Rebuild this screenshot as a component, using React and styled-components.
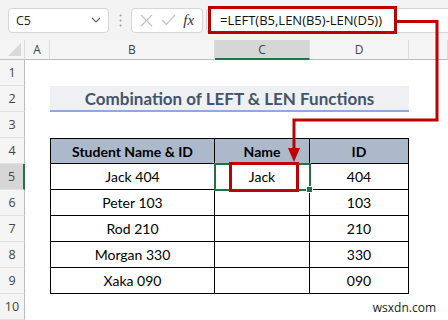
import React from "react";
import styled, { createGlobalStyle } from "styled-components";

const GlobalStyle = createGlobalStyle`
  body {
    margin: 0;
    background: #fff;
    font-family: "Open Sans", "Noto Sans", sans-serif;
  }
`;

const Window = styled.div`
  position: relative;
  width: 448px;
  height: 320px;
  overflow: hidden;
  background: #fff;
`;

const Toolbar = styled.div`
  display: flex;
  align-items: center;
  height: 40px;
  padding-left: 8px;
  background: #f3f3f3;
`;

const NameBox = styled.div`
  display: flex;
  align-items: center;
  justify-content: space-between;
  width: 101px;
  height: 25px;
  box-sizing: border-box;
  padding: 0 7px 0 7px;
  background: #fff;
  border: 1px solid #d6d6d6;
  border-radius: 4px;
  font-size: 12.5px;
  color: #222;
`;

const Dots = styled.div`
  display: flex;
  justify-content: center;
  width: 22px;
`;

const IconBox = styled.div`
  display: flex;
  align-items: center;
  justify-content: space-around;
  width: 72px;
  height: 25px;
  box-sizing: border-box;
  padding: 0 4px;
  background: #fff;
  border: 1px solid #d6d6d6;
  border-radius: 4px;
`;

const Fx = styled.span`
  font-family: "Liberation Serif", serif;
  font-style: italic;
  font-size: 15px;
  color: #333;
`;

const FormulaBar = styled.div`
  flex: 1;
  display: flex;
  align-items: center;
  height: 25px;
  margin-left: 3px;
  box-sizing: border-box;
  background: #fff;
  border: 1px solid #d6d6d6;
  border-right: none;
  border-radius: 4px 0 0 4px;
`;

const Formula = styled.div`
  display: flex;
  align-items: center;
  width: 189px;
  height: 28px;
  margin-left: 1px;
  box-sizing: border-box;
  padding-left: 9px;
  border: 3px solid #c00000;
  font-size: 13px;
  color: #111;
  white-space: nowrap;
`;

const Sheet = styled.div`
  display: grid;
  grid-template-columns: 25px 25px 165px 95px 99px 39px;
  grid-template-rows: 20px repeat(10, 26px);
`;

const ColHead = styled.div`
  display: flex;
  align-items: center;
  justify-content: center;
  box-sizing: border-box;
  background: ${(p) => (p.$active ? "#d6d6d6" : "#f5f5f5")};
  border-right: 1px solid #dcdcdc;
  border-bottom: ${(p) => (p.$active ? "2px solid #217346" : "1px solid #bdbdbd")};
  font-size: 12px;
  color: #444;
`;

const Corner = styled(ColHead)`
  position: relative;
  &::after {
    content: "";
    position: absolute;
    right: 3px;
    bottom: 3px;
    border-style: solid;
    border-width: 0 0 13px 13px;
    border-color: transparent transparent #d9d9d9 transparent;
  }
`;

const RowHead = styled.div`
  display: flex;
  align-items: center;
  justify-content: center;
  box-sizing: border-box;
  background: ${(p) => (p.$active ? "#d6d6d6" : "#f5f5f5")};
  border-right: ${(p) => (p.$active ? "2px solid #217346" : "1px solid #bdbdbd")};
  border-bottom: 1px solid #e0e0e0;
  font-size: 12.5px;
  color: #444;
`;

const Cell = styled.div`
  position: relative;
  display: flex;
  align-items: center;
  justify-content: center;
  box-sizing: border-box;
  font-family: Lato, "Open Sans", sans-serif;
  font-size: 14px;
  color: #000;
  background: ${(p) => (p.$head ? "#acb9ca" : "transparent")};
  font-weight: ${(p) => (p.$head ? 700 : 400)};
  border-right: ${(p) => (p.$boxed ? "1px solid #000" : "none")};
  border-bottom: ${(p) => (p.$boxed ? "1px solid #000" : "none")};
  border-left: ${(p) => (p.$first ? "1px solid #000" : "none")};
  border-top: ${(p) => (p.$top ? "1px solid #000" : "none")};
  ${(p) =>
    p.$selected &&
    `
    outline: 2px solid #217346;
    outline-offset: -1px;
    z-index: 1;
    &::after {
      content: "";
      position: absolute;
      right: -4px;
      bottom: -4px;
      width: 5px;
      height: 5px;
      background: #217346;
      border: 1px solid #fff;
    }
  `}
`;

const Title = styled.div`
  grid-column: span 3;
  display: flex;
  align-items: center;
  justify-content: center;
  box-sizing: border-box;
  background: #eef0f4;
  border-bottom: 2px solid #8ea9db;
  font-family: Lato, "Open Sans", sans-serif;
  font-weight: 700;
  font-size: 17px;
  color: #44546a;
`;

const Callout = styled.div`
  position: absolute;
  left: 14px;
  right: 10px;
  top: -2px;
  bottom: -3px;
  border: 3px solid #c00000;
  pointer-events: none;
`;

const Arrow = styled.svg`
  position: absolute;
  left: 0;
  top: 0;
  pointer-events: none;
  z-index: 3;
`;

const Watermark = styled.div`
  position: absolute;
  right: 12px;
  bottom: 4px;
  font-family: "Open Sans", sans-serif;
  font-size: 12px;
  color: #222;
`;

const students = [
  ["Jack 404", "Jack", "404"],
  ["Peter 103", "", "103"],
  ["Rod 210", "", "210"],
  ["Morgan 330", "", "330"],
  ["Xaka 090", "", "090"],
];

const columns = ["A", "B", "C", "D", ""];

export default function App() {
  return (
    <Window>
      <GlobalStyle />
      <Toolbar>
        <NameBox>
          <span>C5</span>
          <svg width="10" height="6" viewBox="0 0 10 6">
            <path d="M1 1 L5 5 L9 1" fill="none" stroke="#666" strokeWidth="1.2" />
          </svg>
        </NameBox>
        <Dots>
          <svg width="3" height="13" viewBox="0 0 3 13">
            <circle cx="1.5" cy="1.5" r="1" fill="#999" />
            <circle cx="1.5" cy="6.5" r="1" fill="#999" />
            <circle cx="1.5" cy="11.5" r="1" fill="#999" />
          </svg>
        </Dots>
        <IconBox>
          <svg width="13" height="13" viewBox="0 0 13 13">
            <path d="M1 1 L12 12 M12 1 L1 12" stroke="#c4c4c4" strokeWidth="1.2" />
          </svg>
          <svg width="15" height="12" viewBox="0 0 15 12">
            <path d="M1 6 L5.5 10.5 L14 1" fill="none" stroke="#c4c4c4" strokeWidth="1.2" />
          </svg>
          <Fx>fx</Fx>
        </IconBox>
        <FormulaBar>
          <Formula>=LEFT(B5,LEN(B5)-LEN(D5))</Formula>
        </FormulaBar>
      </Toolbar>

      <Sheet>
        <Corner />
        {columns.map((c) => (
          <ColHead key={c || "E"} $active={c === "C"}>
            {c}
          </ColHead>
        ))}

        <RowHead>1</RowHead>
        <Cell />
        <Cell />
        <Cell />
        <Cell />
        <Cell />

        <RowHead>2</RowHead>
        <Cell />
        <Title>Combination of LEFT &amp; LEN Functions</Title>
        <Cell />

        <RowHead>3</RowHead>
        <Cell />
        <Cell />
        <Cell />
        <Cell />
        <Cell />

        <RowHead>4</RowHead>
        <Cell />
        <Cell $head $boxed $first $top>Student Name &amp; ID</Cell>
        <Cell $head $boxed $top>Name</Cell>
        <Cell $head $boxed $top>ID</Cell>
        <Cell />

        {students.map(([full, name, id], i) => (
          <React.Fragment key={full}>
            <RowHead $active={i === 0}>{i + 5}</RowHead>
            <Cell />
            <Cell $boxed $first>{full}</Cell>
            <Cell $boxed $selected={i === 0}>
              {name}
              {i === 0 && <Callout />}
            </Cell>
            <Cell $boxed>{id}</Cell>
            <Cell />
          </React.Fragment>
        ))}

        <RowHead>10</RowHead>
        <Cell />
        <Cell />
        <Cell />
        <Cell />
        <Cell />
      </Sheet>

      <Arrow width="448" height="320" viewBox="0 0 448 320">
        <polyline
          points="397,21.5 437,21.5 437,120 294,120 294,150"
          fill="none"
          stroke="#c00000"
          strokeWidth="3"
        />
        <polygon points="288,148 300,148 294,162" fill="#c00000" />
      </Arrow>

      <Watermark>wsxdn.com</Watermark>
    </Window>
  );
}
